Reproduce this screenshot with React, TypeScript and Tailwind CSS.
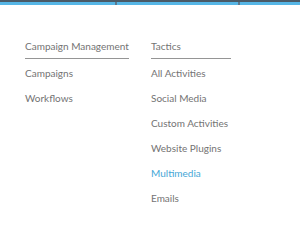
import React from 'react';

const groups = [
  {
    title: 'Campaign Management',
    width: 'w-[104px]',
    items: ['Campaigns', 'Workflows'],
  },
  {
    title: 'Tactics',
    width: 'w-[80px]',
    items: ['All Activities', 'Social Media', 'Custom Activities', 'Website Plugins', 'Multimedia', 'Emails'],
  },
];

export default function App() {
  return (
    <div className="w-[300px] h-[240px] bg-white overflow-hidden font-['Lato','Open_Sans',sans-serif]">
      {/* top nav strip */}
      <div className="h-[2px] bg-[#4a5a67]" />
      <div className="flex h-[3px] bg-[#56b6e6]">
        <div className="w-[115px]" />
        <div className="w-[123px] border-l-2 border-[#5a7a90]" />
        <div className="flex-1 border-l-2 border-[#5a7a90]" />
      </div>

      {/* mega menu */}
      <div className="flex gap-[22px] pl-[25px] pt-[33px]">
        {groups.map((g) => (
          <div key={g.title} className={g.width}>
            <div className="text-[10px] leading-[16px] text-[#737373] whitespace-nowrap pb-[4px] border-b border-[#959595]">
              {g.title}
            </div>
            <ul className="pt-[2px]">
              {g.items.map((item) => (
                <li
                  key={item}
                  className={`text-[10px] leading-[25px] whitespace-nowrap ${
                    item === 'Multimedia' ? 'text-[#45a6d6]' : 'text-[#737373]'
                  }`}
                >
                  {item}
                </li>
              ))}
            </ul>
          </div>
        ))}
      </div>
    </div>
  );
}
